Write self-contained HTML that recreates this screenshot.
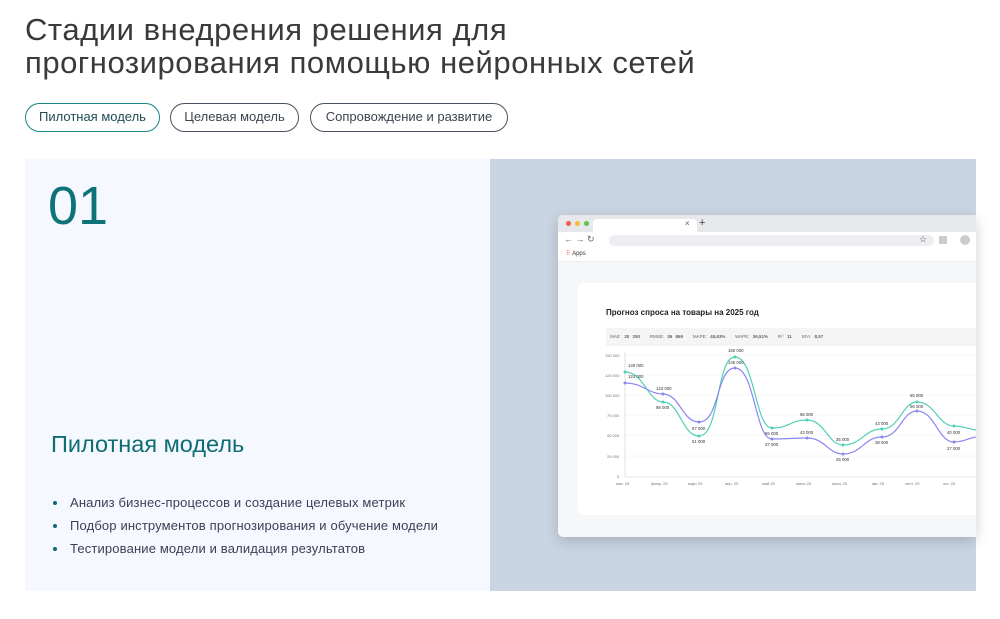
<!DOCTYPE html><html><head><meta charset="utf-8"><style>
*{margin:0;padding:0;box-sizing:border-box}
body{width:1000px;height:619px;background:#fff;font-family:"Liberation Sans",sans-serif;position:relative;overflow:hidden;color:#333}
.a{position:absolute}
h1{position:absolute;left:25px;top:13px;font-size:31px;font-weight:normal;line-height:33px;color:#3a3a3a;letter-spacing:0.55px}
.tab{position:absolute;top:103px;height:29px;border:1.5px solid #4a5360;border-radius:15px;font-size:13px;line-height:26px;text-align:center;color:#3c4450}
ul{position:absolute;left:51px;top:494px;list-style:none;font-size:13px;color:#3c4055;letter-spacing:0.15px}
li{height:23px;line-height:18px;padding-left:19px;position:relative}
li:before{content:"";position:absolute;left:2px;top:7px;width:4px;height:4px;border-radius:50%;background:#0e6a70}
</style></head><body>
<h1>Стадии внедрения решения для<br>прогнозирования помощью нейронных сетей</h1>
<div class="tab" style="left:25px;width:135px;border-color:#1a8585;color:#1e4c52">Пилотная модель</div>
<div class="tab" style="left:170px;width:129px">Целевая модель</div>
<div class="tab" style="left:310px;width:198px">Сопровождение и развитие</div>
<div class="a" style="left:25px;top:159px;width:465px;height:432px;background:#f5f8fe"></div>
<div class="a" style="left:490px;top:159px;width:486px;height:432px;background:#c9d5e3"></div>
<div class="a" style="left:48px;top:176px;font-size:54px;color:#0e7377;line-height:60px">01</div>
<div class="a" style="left:51px;top:430px;font-size:23.5px;color:#0e6d73;line-height:28px">Пилотная модель</div>
<ul><li>Анализ бизнес-процессов и создание целевых метрик</li><li>Подбор инструментов прогнозирования и обучение модели</li><li>Тестирование модели и валидация результатов</li></ul>
<div class="a" style="left:558px;top:215px;width:418px;height:322px;background:#f6f7f9;border-radius:5px 0 0 5px;box-shadow:0 4px 14px rgba(0,0,0,.18);overflow:hidden">
<div class="a" style="left:0;top:0;width:418px;height:17px;background:#e6e8eb"></div>
<div class="a" style="left:8px;top:6px;width:5px;height:5px;border-radius:50%;background:#ee5d55"></div>
<div class="a" style="left:17px;top:6px;width:5px;height:5px;border-radius:50%;background:#f2bb3a"></div>
<div class="a" style="left:26px;top:6px;width:5px;height:5px;border-radius:50%;background:#5cc54a"></div>
<div class="a" style="left:35px;top:4px;width:104px;height:13px;background:#fff;border-radius:4px 4px 0 0"></div>
<div class="a" style="left:127px;top:4px;font-size:8px;color:#555">×</div>
<div class="a" style="left:141px;top:2px;font-size:11px;color:#444">+</div>
<div class="a" style="left:0;top:17px;width:418px;height:30px;background:#fff;border-bottom:1px solid #eee"></div>
<div class="a" style="left:6px;top:19px;font-size:9px;color:#666">← → ↻</div>
<div class="a" style="left:51px;top:20px;width:325px;height:11px;background:#eceef1;border-radius:6px"></div>
<div class="a" style="left:361px;top:19px;font-size:9px;color:#555">☆</div>
<div class="a" style="left:381px;top:21px;width:8px;height:8px;background:#ccc"></div>
<div class="a" style="left:402px;top:20px;width:10px;height:10px;border-radius:50%;background:#ccc"></div>
<div class="a" style="left:8px;top:35px;font-size:6px;color:#333"><span style="color:#e55">⠿</span> Apps</div>
<div class="a" style="left:20px;top:68px;width:420px;height:232px;background:#fff;border-radius:5px"></div>
<div class="a" style="left:48px;top:93px;font-size:8px;font-weight:bold;color:#222">Прогноз спроса на товары на 2025 год</div>
<div class="a" style="left:48px;top:113px;width:380px;height:18px;background:#f5f5f5;font-size:4.5px;color:#666;line-height:18px;padding-left:4px;word-spacing:2px">MAE: <b>30 250</b> &nbsp; RMSE: <b>36 869</b> &nbsp; MAPE: <b>48,63%</b> &nbsp; WAPE: <b>36,51%</b> &nbsp; R²: <b>11</b> &nbsp; SFA: <b>8,57</b></div>
</div>
<svg class="a" style="left:558px;top:340px" width="418" height="160" viewBox="558 340 418 160">
<g stroke="#eee" stroke-width=".5"><line x1="625" y1="355" x2="976" y2="355"/><line x1="625" y1="375" x2="976" y2="375"/><line x1="625" y1="395" x2="976" y2="395"/><line x1="625" y1="415" x2="976" y2="415"/><line x1="625" y1="435" x2="976" y2="435"/><line x1="625" y1="456" x2="976" y2="456"/></g>
<line x1="625" y1="352" x2="625" y2="477" stroke="#ccc" stroke-width=".6"/><line x1="625" y1="477" x2="976" y2="477" stroke="#ccc" stroke-width=".6"/>
<g font-size="4" fill="#777" font-family="Liberation Sans"><text x="605" y="357">150 000</text><text x="605" y="377">125 000</text><text x="605" y="397">100 000</text><text x="607" y="417">75 000</text><text x="607" y="437">50 000</text><text x="607" y="458">25 000</text><text x="617" y="478">0</text>
<text x="616" y="485">янв. 25</text><text x="651" y="485">февр. 25</text><text x="688" y="485">март 25</text><text x="725" y="485">апр. 25</text><text x="762" y="485">май 25</text><text x="796" y="485">июнь 25</text><text x="832" y="485">июль 25</text><text x="872" y="485">авг. 25</text><text x="905" y="485">сент. 25</text><text x="943" y="485">окт. 25</text></g>
<path d="M625 372C644 372 648 402 663 402C680 402 682 436 699 436C720 436 716 357 735 357C755 357 755 428 772 428C790 428 790 420 807 420C825 420 828 445 843 445C862 445 864 429 882 429C900 429 902 402 917 402C935 402 938 426 954 426C965 426 970 430 977 430" fill="none" stroke="#4fd1b5" stroke-width="1.2"/>
<path d="M625 383C644 383 648 394 663 394C680 394 682 422 699 422C720 422 716 368 735 368C755 368 755 439 772 439C790 439 790 438 807 438C825 438 828 454 843 454C862 454 864 437 882 437C900 437 902 411 917 411C935 411 938 442 954 442C965 442 970 437 977 437" fill="none" stroke="#8b86f2" stroke-width="1.2"/>
<g fill="#4fd1b5"><circle cx="625" cy="372" r="1.5"/><circle cx="663" cy="402" r="1.5"/><circle cx="699" cy="436" r="1.5"/><circle cx="735" cy="357" r="1.5"/><circle cx="772" cy="428" r="1.5"/><circle cx="807" cy="420" r="1.5"/><circle cx="843" cy="445" r="1.5"/><circle cx="882" cy="429" r="1.5"/><circle cx="917" cy="402" r="1.5"/><circle cx="954" cy="426" r="1.5"/></g>
<g fill="#8b86f2"><circle cx="625" cy="383" r="1.5"/><circle cx="663" cy="394" r="1.5"/><circle cx="699" cy="422" r="1.5"/><circle cx="735" cy="368" r="1.5"/><circle cx="772" cy="439" r="1.5"/><circle cx="807" cy="438" r="1.5"/><circle cx="843" cy="454" r="1.5"/><circle cx="882" cy="437" r="1.5"/><circle cx="917" cy="411" r="1.5"/><circle cx="954" cy="442" r="1.5"/></g>
<g font-size="4.3" fill="#333" font-family="Liberation Sans"><text x="628" y="367">140 000</text><text x="628" y="378">124 000</text><text x="656" y="390">123 000</text><text x="656" y="409">98 000</text><text x="692" y="430">67 000</text><text x="692" y="443">51 000</text><text x="728" y="352">150 000</text><text x="728" y="364">145 000</text><text x="765" y="435">55 000</text><text x="765" y="446">37 000</text><text x="800" y="416">65 000</text><text x="800" y="434">43 000</text><text x="836" y="441">35 000</text><text x="836" y="461">25 000</text><text x="875" y="425">43 000</text><text x="875" y="444">38 000</text><text x="910" y="397">65 000</text><text x="910" y="408">56 000</text><text x="947" y="434">40 000</text><text x="947" y="450">27 000</text></g>
</svg>
</body></html>
